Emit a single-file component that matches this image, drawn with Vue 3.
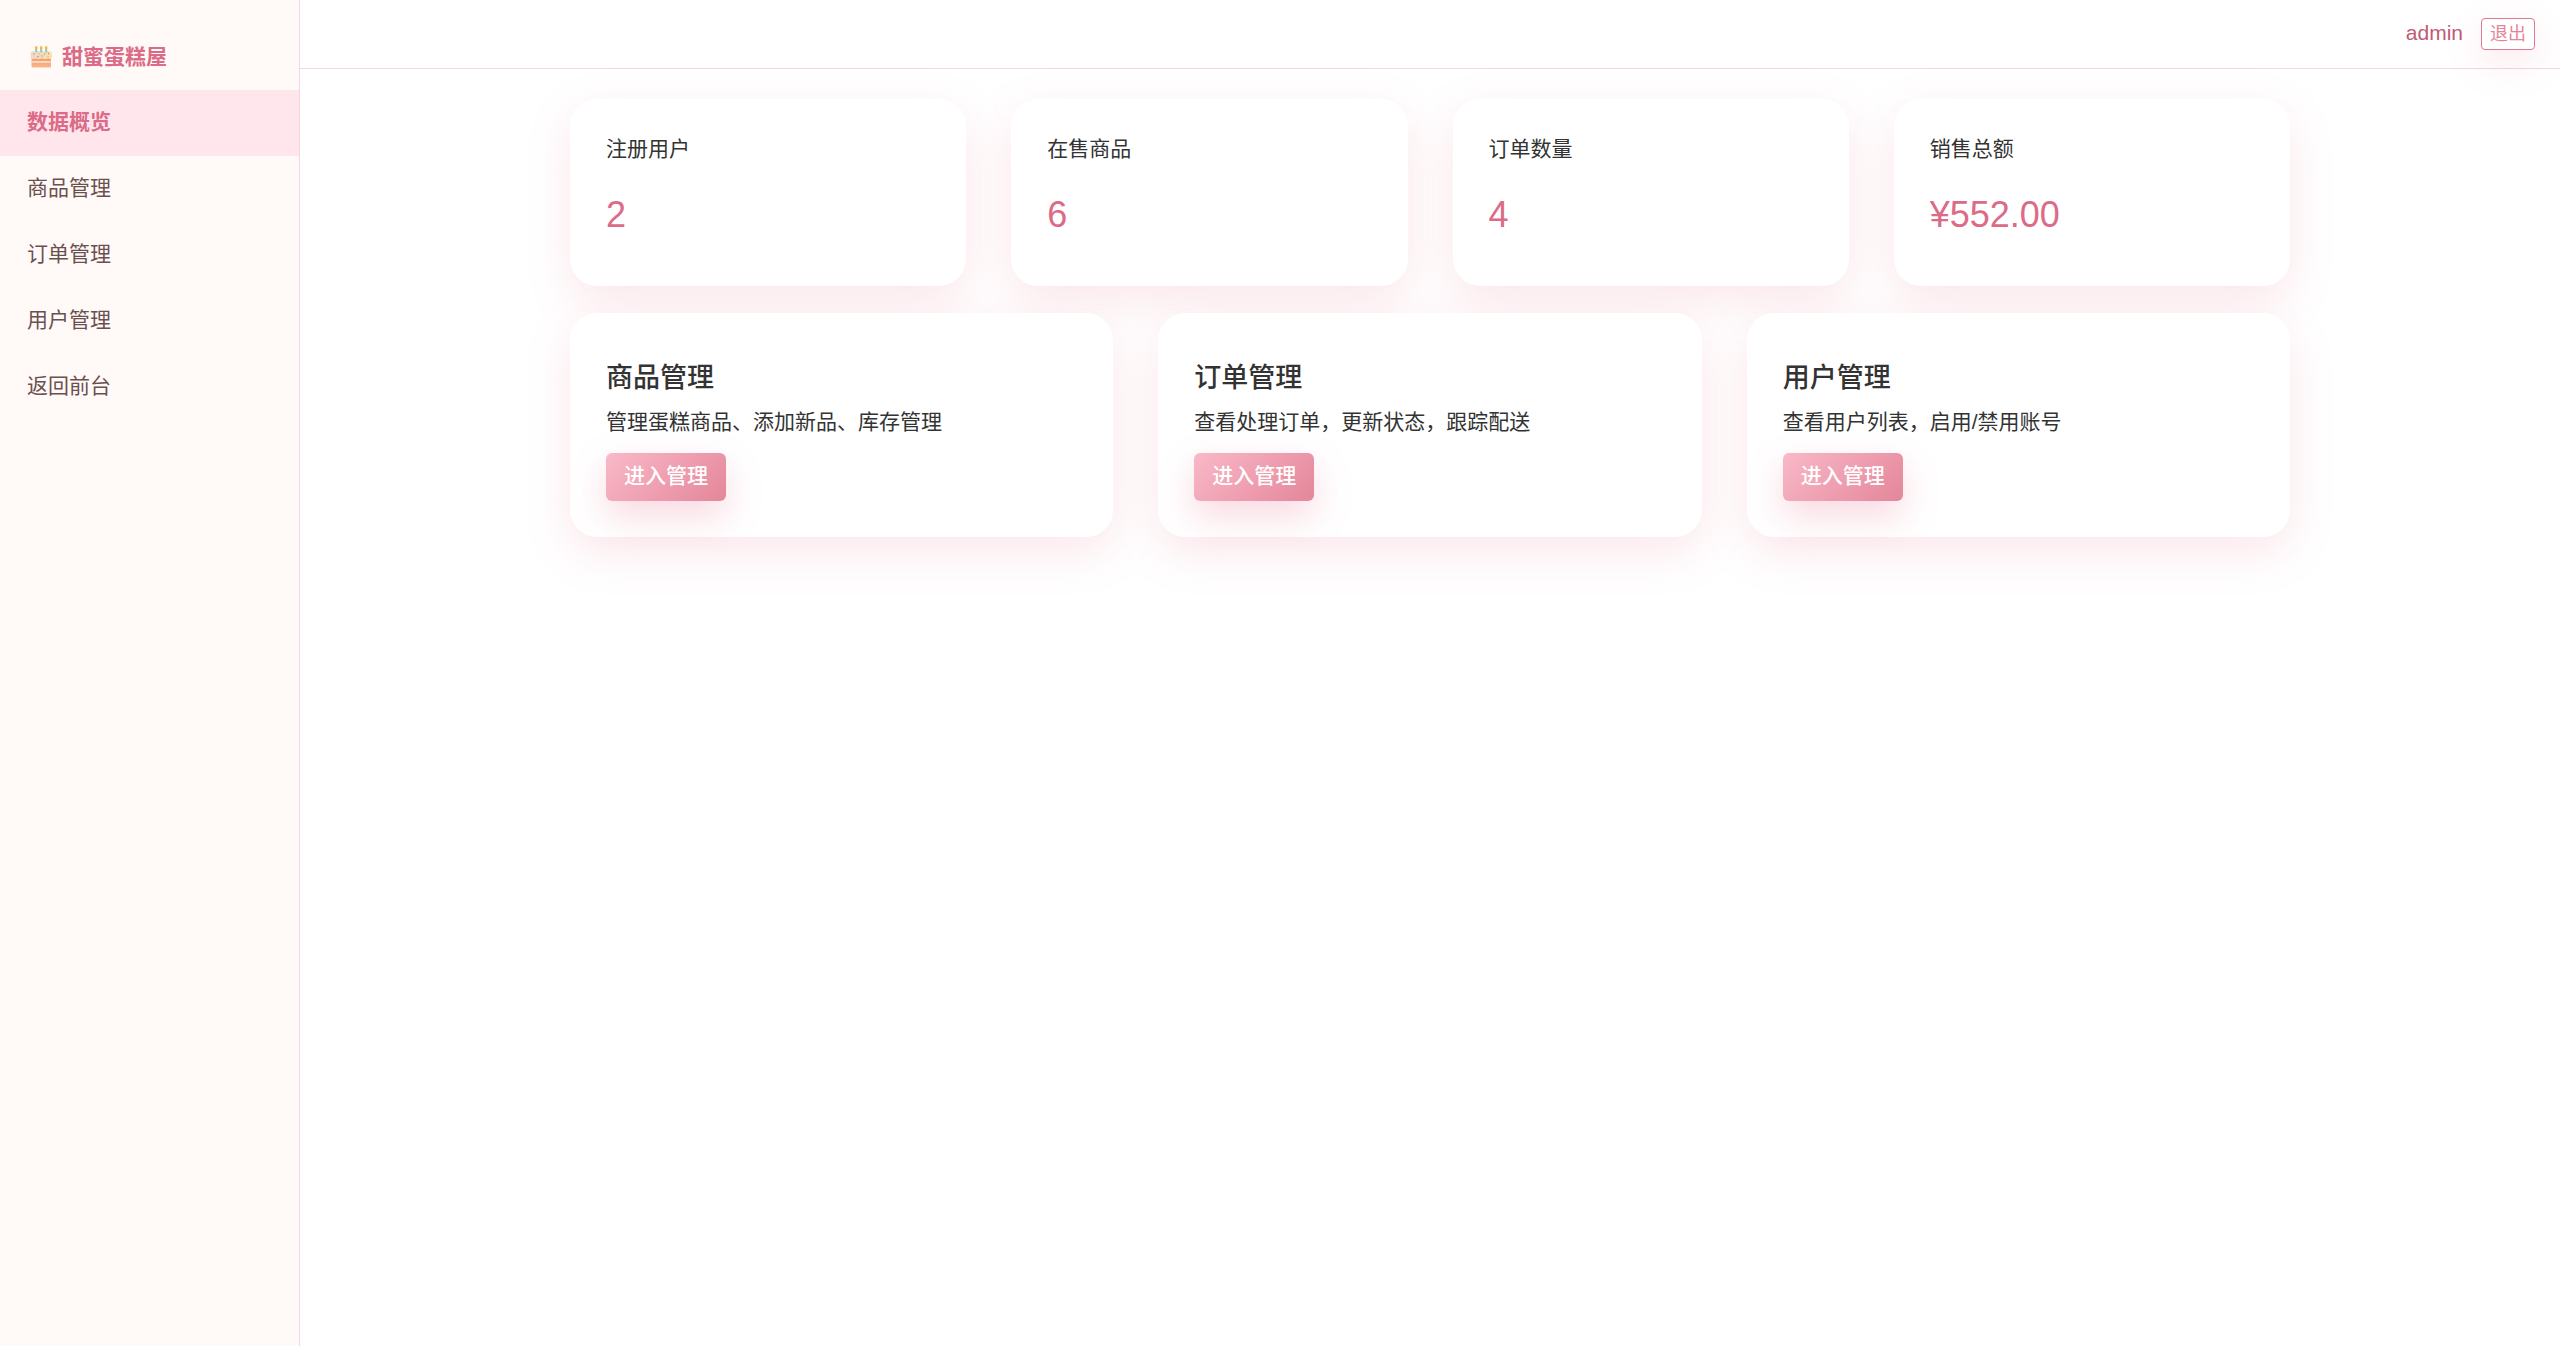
<script setup>
const menu = ['数据概览', '商品管理', '订单管理', '用户管理', '返回前台']

const stats = [
  { label: '注册用户', value: '2' },
  { label: '在售商品', value: '6' },
  { label: '订单数量', value: '4' },
  { label: '销售总额', value: '¥552.00' }
]

const entries = [
  { title: '商品管理', text: '管理蛋糕商品、添加新品、库存管理' },
  { title: '订单管理', text: '查看处理订单，更新状态，跟踪配送' },
  { title: '用户管理', text: '查看用户列表，启用/禁用账号' }
]
</script>

<template>
  <div class="layout">
    <aside class="sidebar">
      <div class="brand">
        <svg class="cake" viewBox="0 0 22 22" aria-hidden="true">
          <defs>
            <linearGradient id="sponge" x1="0" y1="0" x2="0" y2="1">
              <stop offset="0" stop-color="#ee9a76" />
              <stop offset="1" stop-color="#fbb488" />
            </linearGradient>
            <linearGradient id="icing" x1="0" y1="0" x2="1" y2="0">
              <stop offset="0" stop-color="#eed9c4" />
              <stop offset="1" stop-color="#f8e2a8" />
            </linearGradient>
          </defs>
          <rect x="1.500" y="11" width="19.500" height="10.500" rx="1" fill="url(#sponge)" />
          <rect x="1.500" y="15.300" width="19.500" height="1.300" fill="#fff0d8" />
          <path d="M2.500 5.200h17.500a1.800 1.800 0 0 1 1.800 1.800v5q-.8 1.500-2.300.8-1.500-.8-3 0t-3.200 0-3.200 0-3.200 0q-1.500-.8-3 0t-3.200-.8v-5a1.800 1.800 0 0 1 1.800-1.800z" fill="url(#icing)" />
          <g fill="#6fd0ee">
            <rect x="5.200" y="3" width="2" height="3.300" />
            <rect x="10.200" y="3" width="2" height="3.300" />
            <rect x="15.200" y="3" width="2" height="3.300" />
          </g>
          <g fill="#fbb43c">
            <ellipse cx="6.200" cy="1.900" rx="1.300" ry="1.800" />
            <ellipse cx="11.200" cy="1.900" rx="1.300" ry="1.800" />
            <ellipse cx="16.200" cy="1.900" rx="1.300" ry="1.800" />
          </g>
          <g fill="#dd718c"><circle cx="4" cy="8" r=".7" /><circle cx="12" cy="10" r=".7" /><circle cx="18.500" cy="7.500" r=".7" /></g>
          <g fill="#8b78b8"><circle cx="8" cy="10.500" r=".7" /><circle cx="14.500" cy="8" r=".6" /></g>
          <g fill="#e8a04c"><circle cx="9" cy="7.700" r=".6" /><circle cx="18" cy="10.500" r=".6" /></g>
        </svg>
        <span>甜蜜蛋糕屋</span>
      </div>
      <nav>
        <a v-for="(item, i) in menu" :key="item" href="#" class="item" :class="{ active: i === 0 }">{{ item }}</a>
      </nav>
    </aside>

    <div class="main">
      <header class="topbar">
        <span class="user">admin</span>
        <button type="button" class="logout">退出</button>
      </header>
      <main class="content">
        <section class="row">
          <article v-for="s in stats" :key="s.label" class="card">
            <p class="label">{{ s.label }}</p>
            <p class="value">{{ s.value }}</p>
          </article>
        </section>
        <section class="row">
          <article v-for="e in entries" :key="e.title" class="card">
            <h2 class="title">{{ e.title }}</h2>
            <p class="text">{{ e.text }}</p>
            <button type="button" class="enter">进入管理</button>
          </article>
        </section>
      </main>
    </div>
  </div>
</template>

<style>
body {
  margin: 0;
  background: #fff;
}
</style>

<style scoped>
.layout {
  display: flex;
  min-height: 100vh;
  font-family: "Liberation Sans", "Noto Sans CJK SC", sans-serif;
  font-size: 21px;
  line-height: 30px;
  color: #333;
}
.sidebar {
  box-sizing: border-box;
  flex: 0 0 300px;
  background: #fffaf7;
  border-right: 1px solid #f3d6df;
}
.brand {
  display: flex;
  align-items: center;
  gap: 10px;
  height: 66px;
  padding: 24px 30px 0;
  color: #db6b87;
  font-weight: 700;
}
.cake {
  width: 22px;
  height: 22px;
}
.item {
  display: block;
  padding: 17px 27px 19px;
  color: #6b5050;
  text-decoration: none;
}
.item.active {
  background: #ffe6ec;
  color: #db6b87;
  font-weight: 700;
}
.main {
  flex: 1;
  min-width: 0;
}
.topbar {
  display: flex;
  justify-content: flex-end;
  align-items: center;
  gap: 18px;
  height: 68px;
  padding: 0 25px;
  background: #fff;
  border-bottom: 1px solid #f3d6df;
}
.user {
  padding-bottom: 2px;
  color: #c05a75;
}
.logout {
  box-sizing: border-box;
  height: 32px;
  padding: 0 8px;
  border: 1px solid #e0788f;
  border-radius: 4px;
  background: #fff;
  box-shadow: 0 12px 36px rgba(231, 120, 145, 0.18);
  color: #e58599;
  font: inherit;
  font-size: 18px;
  line-height: 30px;
}
.content {
  display: flex;
  flex-direction: column;
  gap: 27px;
  max-width: 1720px;
  margin: 0 auto;
  padding: 30px 24px;
}
.row {
  display: flex;
  gap: 45px;
}
.card {
  flex: 1;
  padding: 36px;
  border-radius: 27px;
  background: #fff;
  box-shadow: 0 15px 45px rgba(231, 120, 145, 0.18);
}
.label,
.value,
.title,
.text {
  margin: 0;
}
.label {
  line-height: 28px;
}
.value {
  margin: 25px 0 8px;
  color: #db6b87;
  font-size: 36px;
  line-height: 54px;
}
.title {
  padding-top: 13px;
  font-size: 27px;
  font-weight: 500;
  line-height: 32px;
}
.text {
  margin: 13px 0 16px;
}
.enter {
  display: block;
  height: 48px;
  padding: 0 18px 2px;
  border: 0;
  border-radius: 6px;
  background: linear-gradient(135deg, #f9b9c8, #e4869a);
  box-shadow: 0 15px 36px rgba(231, 120, 145, 0.28);
  color: #fff;
  font: inherit;
  font-weight: 500;
}
</style>
